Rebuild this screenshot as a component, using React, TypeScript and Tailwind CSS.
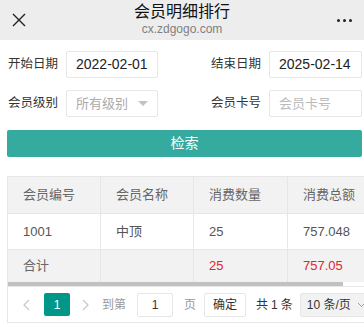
import React from 'react';

const font = { fontFamily: '"Liberation Sans", "Noto Sans CJK SC", sans-serif' };

const Header = () => (
  <div className="relative flex h-[40px] items-center justify-between bg-[#ededed] px-3">
    <svg width="14" height="14" viewBox="0 0 14 14">
      <path d="M1 1 L13 13 M13 1 L1 13" stroke="#222" strokeWidth="1.4" fill="none" />
    </svg>
    <div className="absolute left-0 right-0 top-[2px] flex flex-col items-center">
      <div className="text-[16px] leading-[20px] text-[#111]">会员明细排行</div>
      <div className="text-[12px] leading-[14px] text-[#808080]">cx.zdgogo.com</div>
    </div>
    <div className="flex gap-[3px]">
      <span className="h-[3px] w-[3px] rounded-full bg-[#222]" />
      <span className="h-[3px] w-[3px] rounded-full bg-[#222]" />
      <span className="h-[3px] w-[3px] rounded-full bg-[#222]" />
    </div>
  </div>
);

const Field = ({ label, children, width }: { label: string; children: React.ReactNode; width: string }) => (
  <div className="flex items-center">
    <span className="mr-[8px] text-[12.5px] text-[#333]">{label}</span>
    <div className={`flex h-[27px] items-center rounded-[2px] border border-[#e6e6e6] bg-white px-[9px] ${width}`}>
      {children}
    </div>
  </div>
);

const cols = ['会员编号', '会员名称', '消费数量', '消费总额'];

export default function App() {
  return (
    <div className="h-[327px] w-[364px] overflow-hidden bg-white" style={font}>
      <Header />
      <div className="pl-2 pr-[2px] pt-[11px]">
        <div className="flex justify-between">
          <Field label="开始日期" width="w-[92px]">
            <span className="text-[14px] text-[#222]">2022-02-01</span>
          </Field>
          <Field label="结束日期" width="w-[93px]">
            <span className="text-[14px] text-[#222]">2025-02-14</span>
          </Field>
        </div>
        <div className="mt-[12px] flex justify-between">
          <Field label="会员级别" width="w-[92px] justify-between">
            <span className="text-[13px] text-[#aaa]">所有级别</span>
            <span className="h-0 w-0 border-x-[5px] border-t-[5px] border-x-transparent border-t-[#c2c2c2]" />
          </Field>
          <Field label="会员卡号" width="w-[93px]">
            <span className="text-[13px] text-[#bbb]">会员卡号</span>
          </Field>
        </div>
      </div>
      <div className="mx-[7px] mt-[13px] flex h-[27px] w-[355px] items-center justify-center rounded-[2px] bg-[#35aa9e] text-[14px] text-white">
        检索
      </div>
      <div className="ml-[7px] mt-[19px] w-[420px]">
        <div className="border border-[#e6e6e6]">
          <div className="grid grid-cols-[93px_93px_94px_140px] bg-[#f2f2f2] text-[13px] text-[#666]">
            {cols.map((c) => (
              <div key={c} className="flex h-[36px] items-center border-r border-[#e6e6e6] pl-[15px]">
                {c}
              </div>
            ))}
          </div>
          <div className="grid grid-cols-[93px_93px_94px_140px] border-t border-[#e6e6e6] text-[13px] text-[#555]">
            {['1001', '中顶', '25', '757.048'].map((c, i) => (
              <div key={i} className="flex h-[35px] items-center border-r border-[#e6e6e6] pl-[15px]">
                {c}
              </div>
            ))}
          </div>
          <div className="grid grid-cols-[93px_93px_94px_140px] border-t border-[#e6e6e6] bg-[#f2f2f2] text-[13px]">
            {['合计', '', '25', '757.05'].map((c, i) => (
              <div
                key={i}
                className={`flex h-[32px] items-center border-r border-[#e6e6e6] pl-[15px] ${i >= 2 ? 'text-[#e0262b]' : 'text-[#666]'}`}
              >
                {c}
              </div>
            ))}
          </div>
          <div className="h-[4px] w-[335px] bg-[#c1c1c1]" />
        </div>
        <div className="flex h-[36px] items-center border-x border-b border-[#e6e6e6] text-[12px] text-[#333]">
          <svg width="8" height="12" viewBox="0 0 8 12" className="ml-[14px]">
            <path d="M7 1 L2 6 L7 11" stroke="#c8c8c8" strokeWidth="1.2" fill="none" />
          </svg>
          <div className="ml-[14px] flex h-[23px] w-[26px] items-center justify-center rounded-[2px] bg-[#009688] text-white">
            1
          </div>
          <svg width="8" height="12" viewBox="0 0 8 12" className="ml-[12px]">
            <path d="M1 1 L6 6 L1 11" stroke="#c8c8c8" strokeWidth="1.2" fill="none" />
          </svg>
          <span className="ml-[12px] text-[#999]">到第</span>
          <div className="ml-[11px] flex h-[24px] w-[36px] items-center justify-center rounded-[2px] border border-[#e6e6e6]">
            1
          </div>
          <span className="ml-[11px] text-[#999]">页</span>
          <div className="ml-[8px] flex h-[24px] w-[42px] items-center justify-center rounded-[2px] border border-[#e6e6e6]">
            确定
          </div>
          <span className="ml-[10px] flex items-center gap-[3px]">
            <span>共</span>
            <span>1</span>
            <span>条</span>
          </span>
          <div className="ml-[7px] flex h-[24px] w-[70px] items-center gap-[6px] rounded-[2px] border border-[#e6e6e6] bg-[#f2f2f2] pl-[6px]">
            10 条/页
            <svg width="9" height="6" viewBox="0 0 9 6">
              <path d="M1 1 L4.5 4.5 L8 1" stroke="#999" strokeWidth="1" fill="none" />
            </svg>
          </div>
        </div>
      </div>
    </div>
  );
}
